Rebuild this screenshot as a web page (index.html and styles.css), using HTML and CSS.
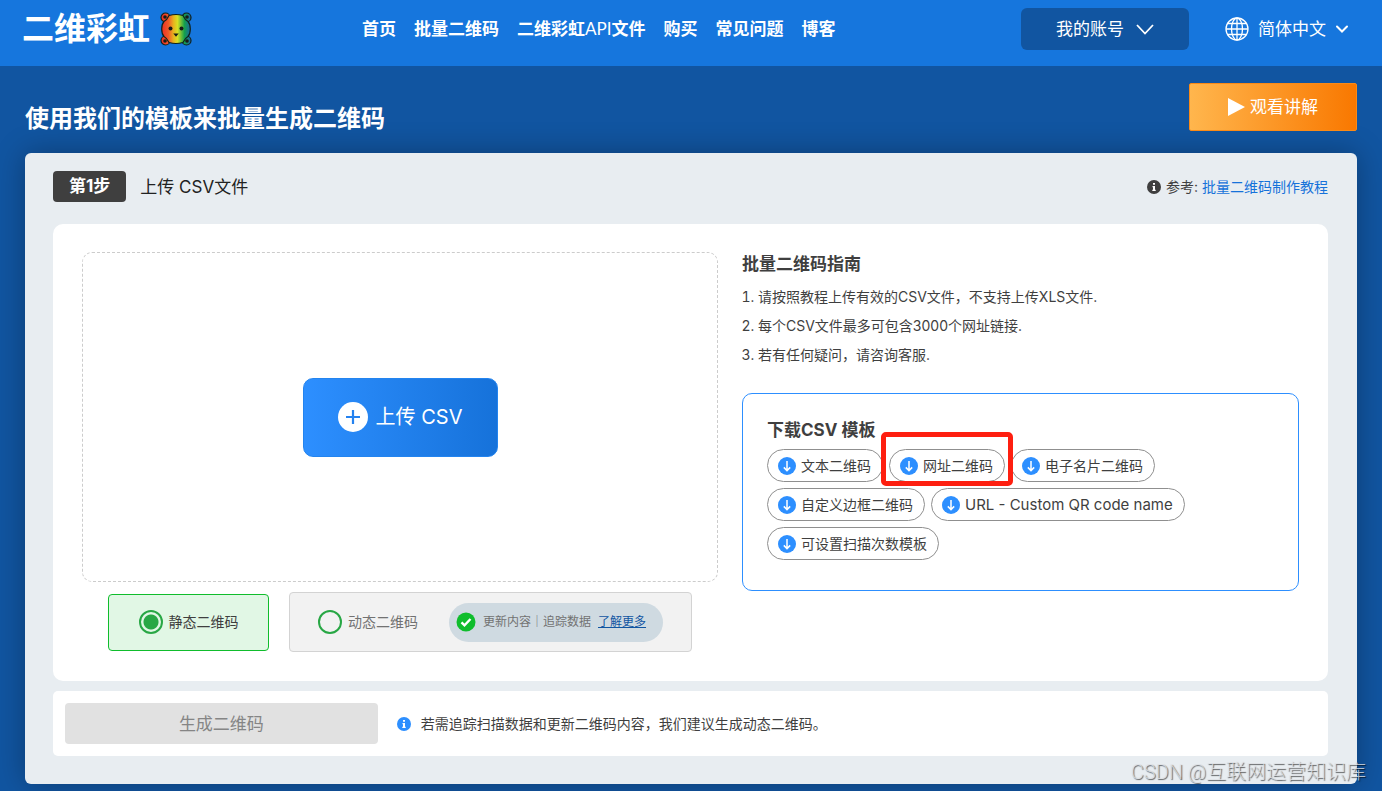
FILE: index.html
```html
<!DOCTYPE html>
<html lang="zh-CN">
<head>
<meta charset="utf-8">
<meta name="viewport" content="width=device-width, initial-scale=1">
<title>二维彩虹 - 批量二维码</title>
<link rel="stylesheet" href="styles.css">
</head>
<body>
<svg class="sprite" aria-hidden="true">
  <symbol id="down" viewBox="0 0 18 18">
    <circle cx="9" cy="9" r="9" fill="#2d8fff"/>
    <path d="M9 4v9.500M5.800 10.400L9 13.600l3.200-3.200" fill="none" stroke="#fff" stroke-width="1.500"/>
  </symbol>
  <symbol id="info" viewBox="0 0 14 14">
    <circle cx="7" cy="7" r="7" fill="currentColor"/>
    <path d="M6 3h2v1.700H6zM5.500 6H8v3.700h.7V11H5.300V9.700H6V7.200h-.5z" fill="#fff"/>
  </symbol>
</svg>

<header class="header">
  <a class="logo" href="#">
    <span>二维彩虹</span>
    <svg class="logo-bear" viewBox="0 0 32 34" aria-hidden="true">
      <defs>
        <linearGradient id="rainbow" gradientUnits="userSpaceOnUse" x1="1" y1="0" x2="31" y2="0">
          <stop offset="0.050" stop-color="#ee3224"/>
          <stop offset="0.250" stop-color="#f15a29"/>
          <stop offset="0.420" stop-color="#e8b41e"/>
          <stop offset="0.550" stop-color="#d7df23"/>
          <stop offset="0.780" stop-color="#14a04b"/>
          <stop offset="1" stop-color="#1b5fae"/>
        </linearGradient>
      </defs>
      <g fill="url(#rainbow)" stroke="#10221c" stroke-width="1.200">
        <circle cx="5.500" cy="5.500" r="4.500"/><circle cx="26.500" cy="5.500" r="4.500"/>
        <circle cx="5.500" cy="28.500" r="4.500"/><circle cx="26.500" cy="28.500" r="4.500"/>
        <path d="M9 3.500Q16 1.500 23 3.500Q25 8 28 9.500Q30.300 12 30.300 17Q30.300 22 28 24.500Q25 26 23 30.500Q16 32.500 9 30.500Q7 26 4 24.500Q1.700 22 1.700 17Q1.700 12 4 9.500Q7 8 9 3.500z"/>
      </g>
      <g fill="#171a18">
        <circle cx="5" cy="5" r="1.800"/><circle cx="27" cy="5" r="1.800"/>
        <circle cx="5" cy="29" r="1.800"/><circle cx="27" cy="29" r="1.800"/>
        <circle cx="10.500" cy="16.500" r="2"/><circle cx="21.500" cy="16.500" r="2"/>
        <path d="M13.300 21.500h5.400L16 24.800z"/>
      </g>
    </svg>
  </a>
  <nav class="nav">
    <a href="#">首页</a>
    <a href="#">批量二维码</a>
    <a href="#">二维彩虹<span class="nav-latin">API</span>文件</a>
    <a href="#">购买</a>
    <a href="#">常见问题</a>
    <a href="#">博客</a>
  </nav>
  <div class="header-tools">
    <button class="account" type="button" aria-haspopup="true">
      我的账号
      <svg width="18" height="11" viewBox="0 0 18 11" aria-hidden="true"><path d="M1 1l8 8.500L17 1" fill="none" stroke="#fff" stroke-width="1.800"/></svg>
    </button>
    <div class="language">
      <svg width="24" height="24" viewBox="0 0 24 24" aria-hidden="true" fill="none" stroke="#fff" stroke-width="1.300">
        <circle cx="12" cy="12" r="11"/><ellipse cx="12" cy="12" rx="5.500" ry="11"/>
        <path d="M12 1v22M1 12h22M2.500 6.500h19M2.500 17.500h19"/>
      </svg>
      <select class="language-select" aria-label="语言">
        <option>简体中文</option>
      </select>
      <svg width="12" height="8" viewBox="0 0 12 8" aria-hidden="true"><path d="M1 1.500l5 5 5-5" fill="none" stroke="#fff" stroke-width="2" stroke-linecap="round"/></svg>
    </div>
  </div>
</header>

<main class="page">
  <div class="title-row">
    <h1>使用我们的模板来批量生成二维码</h1>
    <button class="watch" type="button">
      <svg width="17" height="18" viewBox="0 0 17 18" aria-hidden="true"><path d="M0 0l17 9-17 9z" fill="#fff"/></svg>
      观看讲解
    </button>
  </div>

  <section class="panel">
    <div class="step-row">
      <span class="step-badge">第1步</span>
      <h2 class="step-title">上传 CSV文件</h2>
      <p class="reference">
        <svg class="info-icon"><use href="#info"/></svg>
        <span>参考: <a href="#">批量二维码制作教程</a></span>
      </p>
    </div>

    <div class="workspace">
      <div class="upload-column">
        <div class="dropzone">
          <button class="upload" type="button">
            <svg width="30" height="30" viewBox="0 0 30 30" aria-hidden="true"><circle cx="15" cy="15" r="15" fill="#fff"/><path d="M15 8v14M8 15h14" stroke="#2482f0" stroke-width="2.200"/></svg>
            上传 CSV
          </button>
        </div>
        <div class="types">
          <label class="type type-static">
            <input class="radio" type="radio" name="type" checked>
            静态二维码
          </label>
          <div class="type type-dynamic">
            <label class="type-label">
              <input class="radio" type="radio" name="type">
              动态二维码
            </label>
            <div class="perks">
              <svg width="20" height="20" viewBox="0 0 20 20" aria-hidden="true"><circle cx="10" cy="10" r="9.500" fill="#0fbd2c"/><path d="M5.500 10.300l3 3 6-6.300" fill="none" stroke="#fff" stroke-width="2.400"/></svg>
              <span>更新内容｜追踪数据</span>
              <a href="#">了解更多</a>
            </div>
          </div>
        </div>
      </div>

      <div class="guide">
        <h3>批量二维码指南</h3>
        <ol>
          <li>请按照教程上传有效的CSV文件，不支持上传XLS文件.</li>
          <li>每个CSV文件最多可包含3000个网址链接.</li>
          <li>若有任何疑问，请咨询客服.</li>
        </ol>
        <div class="templates">
          <h3>下载CSV 模板</h3>
          <div class="chips">
            <a class="chip" href="#"><svg><use href="#down"/></svg>文本二维码</a>
            <a class="chip chip-marked" href="#"><svg><use href="#down"/></svg>网址二维码</a>
            <a class="chip" href="#"><svg><use href="#down"/></svg>电子名片二维码</a>
            <a class="chip" href="#"><svg><use href="#down"/></svg>自定义边框二维码</a>
            <a class="chip chip-latin" href="#"><svg><use href="#down"/></svg>URL - Custom QR code name</a>
            <a class="chip" href="#"><svg><use href="#down"/></svg>可设置扫描次数模板</a>
          </div>
        </div>
      </div>
    </div>

    <div class="generate-row">
      <button class="generate" type="button" disabled>生成二维码</button>
      <p class="tip"><svg class="info-icon tip-icon"><use href="#info"/></svg>若需追踪扫描数据和更新二维码内容，我们建议生成动态二维码。</p>
    </div>
  </section>
</main>
<div class="watermark">CSDN @互联网运营知识库</div>
</body>
</html>
```

FILE: styles.css
```css
* { box-sizing: border-box; }

body {
  margin: 0;
  min-height: 100vh;
  position: relative;
  overflow-x: hidden;
  background: #1155a1;
  color: #3f3f3f;
  font: 14px/20px Inter, "Noto Sans CJK SC", sans-serif;
}

h1, h2, h3, p, ol { margin: 0; }
button, select, input { font: inherit; margin: 0; }
button { cursor: pointer; }
svg { flex: none; }
.sprite { position: absolute; width: 0; height: 0; }

.header {
  display: flex;
  align-items: center;
  padding: 8px 34px 16px 22px;
  background: #1676dd;
  color: #fff;
  font-size: 17px;
}

.logo {
  display: flex;
  align-items: center;
  gap: 10px;
  color: #fff;
  font-size: 32px;
  font-weight: 700;
  line-height: 42px;
  text-decoration: none;
}
.logo-bear { width: 32px; height: 34px; }

.nav {
  display: flex;
  gap: 18px;
  margin-left: 170px;
  font-weight: 700;
}
.nav a { color: #fff; text-decoration: none; white-space: nowrap; }
.nav-latin { font-family: Lato, sans-serif; font-weight: 400; }

.header-tools { display: flex; align-items: center; gap: 36px; margin-left: auto; }
.account {
  display: flex;
  align-items: center;
  justify-content: center;
  gap: 12px;
  width: 168px;
  height: 42px;
  border: 0;
  border-radius: 6px;
  background: #1155a1;
  color: #fff;
}
.language { display: flex; align-items: center; gap: 9px; }
.language-select {
  appearance: none;
  width: 69px;
  padding: 0;
  border: 0;
  background: transparent;
  color: #fff;
}

.page { padding: 17px 25px 7px; }

.title-row { display: flex; justify-content: space-between; align-items: flex-start; }
.title-row h1 {
  padding-top: 20px;
  color: #fff;
  font-size: 24px;
  line-height: 32px;
}
.watch {
  display: flex;
  align-items: center;
  justify-content: center;
  gap: 5px;
  width: 168px;
  height: 48px;
  border: 1px solid #fb8a16;
  border-radius: 2px;
  background: linear-gradient(90deg, #ffb64d, #f97800);
  color: #fff;
  font-size: 17px;
}

.panel {
  margin-top: 18px;
  padding: 18px 29px 28px 28px;
  border-radius: 6px;
  background: #e8edf1;
  box-shadow: 0 0 30px rgba(0, 0, 0, 0.3);
}

.step-row { display: flex; align-items: center; margin-bottom: 22px; }
.step-badge {
  padding: 0 16px;
  border-radius: 4px;
  background: #3f3f3f;
  color: #fff;
  font-size: 17px;
  font-weight: 700;
  line-height: 31px;
}
.step-title {
  margin-left: 14px;
  color: #222;
  font-size: 17px;
  font-weight: 400;
}
.reference { display: flex; align-items: center; gap: 5px; margin-left: auto; }
.reference a { color: #1672da; text-decoration: none; }
.info-icon { width: 14px; height: 14px; }

.workspace {
  display: grid;
  grid-template-columns: 636fr 557fr;
  gap: 24px;
  padding: 28px 29px 29px;
  border-radius: 10px;
  background: #fff;
}

.dropzone {
  display: flex;
  align-items: center;
  justify-content: center;
  height: 330px;
  border: 1px dashed #ccc;
  border-radius: 10px;
}
.upload {
  display: flex;
  align-items: center;
  justify-content: center;
  gap: 8px;
  width: 195px;
  height: 79px;
  border: 1px solid #2384ef;
  border-radius: 10px;
  background: linear-gradient(90deg, #2d8fff, #1672da);
  color: #fff;
  font-size: 20px;
}

.types {
  display: flex;
  align-items: center;
  justify-content: center;
  gap: 20px;
  padding: 10px 0 0;
}
.type {
  display: flex;
  align-items: center;
  border: 1px solid #d3d3d3;
  border-radius: 4px;
  background: #f2f2f2;
}
.type-static {
  justify-content: center;
  gap: 6px;
  width: 161px;
  height: 57px;
  border-color: #0fbd2c;
  background: #e1f7e5;
}
.type-dynamic {
  justify-content: space-between;
  width: 403px;
  height: 60px;
  padding: 0 28px;
  color: #727272;
}
.type-label { display: flex; align-items: center; gap: 6px; }
.radio {
  appearance: none;
  width: 24px;
  height: 24px;
  border: 2px solid #28a745;
  border-radius: 50%;
}
.radio:checked { background: radial-gradient(circle, #28a745 7px, transparent 8px); }
.perks {
  display: flex;
  align-items: center;
  gap: 7px;
  width: 214px;
  height: 39px;
  padding-left: 7px;
  border-radius: 20px;
  background: #cfdae1;
  font-size: 12px;
  white-space: nowrap;
}
.perks a { color: #1155a1; }

.guide h3 { font-size: 17px; line-height: 24px; }
.guide ol {
  margin-top: 6px;
  padding-left: 16px;
  line-height: 29px;
}

.templates {
  margin-top: 24px;
  padding: 24px 24px 30px;
  border: 1px solid #2d8fff;
  border-radius: 10px;
}
.chips { display: flex; flex-wrap: wrap; gap: 6px; margin-top: 7px; }
.chip {
  display: flex;
  align-items: center;
  gap: 5px;
  height: 33px;
  padding: 0 11px 0 10px;
  border: 1px solid #8f8f8f;
  border-radius: 17px;
  color: #3f3f3f;
  text-decoration: none;
  white-space: nowrap;
}
.chip svg { width: 18px; height: 18px; }
.chip-latin { font-size: 15px; }
.chip-marked { position: relative; }
.chip-marked::after {
  content: "";
  position: absolute;
  inset: -18px -9px -5px;
  border: 5px solid #fe1f10;
  border-radius: 5px;
}

.generate-row {
  display: flex;
  align-items: center;
  gap: 19px;
  margin-top: 10px;
  padding: 12px;
  border-radius: 5px;
  background: #fff;
}
.generate {
  width: 25%;
  height: 41px;
  border: 0;
  border-radius: 4px;
  background: #e1e1e1;
  color: #858585;
  font-size: 17px;
}
.tip { display: flex; align-items: center; gap: 10px; }
.tip-icon { color: #2d8fff; }

.watermark {
  position: absolute;
  right: 16px;
  bottom: 5px;
  color: rgba(225, 228, 232, 0.8);
  font-family: Roboto, "Noto Sans CJK SC", sans-serif;
  font-size: 20px;
  font-weight: 300;
  line-height: 28px;
  text-shadow: 1px 1px 1px rgba(0, 0, 0, 0.6);
  pointer-events: none;
}
```
